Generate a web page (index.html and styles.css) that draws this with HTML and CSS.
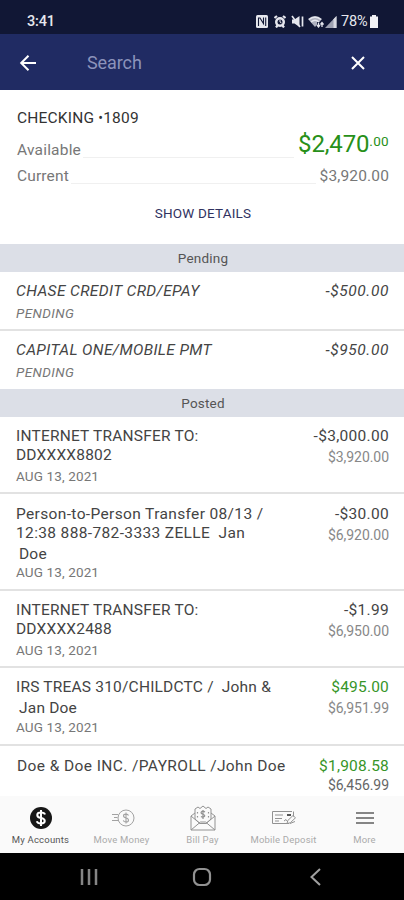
FILE: index.html
```html
<!DOCTYPE html>
<html lang="en">
<head>
<meta charset="utf-8">
<title>Checking</title>
<link rel="stylesheet" href="styles.css">
</head>
<body>
<div class="phone">
  <div class="status">
    <span class="clock">3:41</span>
    <div class="status-icons">
      <svg width="12" height="13" viewBox="0 0 12 13"><rect width="12" height="13" rx="1.500" fill="#e6e7ee"/><path d="M2.500 11V3H4l3.500 5.500V2.500M9.700 2.500V11" fill="none" stroke="#111735" stroke-width="1.100"/></svg>
      <svg class="i-alarm" width="12" height="13" viewBox="0 0 12 13"><circle cx="6" cy="7" r="5" fill="#e6e7ee"/><path d="M.5 3L3 1M11.500 3L9 1M2 12.500l1.500-2M10 12.500l-1.500-2" stroke="#e6e7ee" stroke-width="2.200"/><circle cx="6" cy="7" r="2.500" fill="#111735"/><path d="M6 4.500V7l1.500 1" stroke="#e6e7ee" fill="none"/></svg>
      <svg class="i-mute" width="13" height="13" viewBox="0 0 13 13"><path d="M1 4.500h2.500L8.500 1v11L3.500 8.500H1z" fill="#e6e7ee"/><path d="M1 1l8 11" stroke="#e6e7ee" stroke-width="1.600"/><path d="M11.500 1.500v10" stroke="#e6e7ee" stroke-width="1.700"/></svg>
      <svg class="i-wifi" width="16" height="13" viewBox="0 0 16 13"><path d="M0 4Q7-2 14 4L7 12z" fill="#aeb1bf"/><path d="M1 4.500Q7 0 13 4.500M3 7q4-3.500 8 0" fill="none" stroke="#e6e7ee" stroke-width="1.300"/><path d="M9 12V7h7v5z" fill="#111735"/><path d="M10.500 7.500v4M14 12V8M9 10l1.500 2 1.500-2M12.500 9.500L14 7.500l1.500 2" fill="none" stroke="#e6e7ee" stroke-width="1.300"/></svg>
      <svg class="i-signal" width="12" height="12" viewBox="0 0 12 12"><path d="M0 12L11.500 0v12z" fill="#9ea1b1"/><path d="M8.500 3.200L11.500 0v12h-3z" fill="#d8d9e1"/></svg>
      <span class="percent">78%</span>
      <svg class="i-battery" width="8" height="13" viewBox="0 0 8 13"><path d="M2 0h4v1.500h2V13H0V1.500h2z" fill="#f1f1f5"/></svg>
    </div>
  </div>
  <header class="appbar">
    <svg width="18" height="18" viewBox="0 0 18 18" fill="none" stroke="#fff" stroke-width="2"><path d="M17 9H2.500M9.500 1.700L2.200 9l7.300 7.300"/></svg>
    <span class="search">Search</span>
    <svg class="close" width="16" height="16" viewBox="0 0 16 16" stroke="#fff" stroke-width="2"><path d="M2 2l12 12M14 2L2 14"/></svg>
  </header>
  <section class="summary">
    <h1>CHECKING <span class="dot">•</span>1809</h1>
    <div class="balance available"><span>Available</span><i></i><strong>$2,470<sup>.00</sup></strong></div>
    <div class="balance current"><span>Current</span><i></i><b>$3,920.00</b></div>
    <div class="details">SHOW DETAILS</div>
  </section>
  <main class="list">
    <h2>Pending</h2>
    <article class="row pending"><div><p class="name">CHASE CREDIT CRD/EPAY</p><p class="date">PENDING</p></div><div class="sums"><p class="amount">-$500.00</p></div></article>
    <article class="row pending second"><div><p class="name">CAPITAL ONE/MOBILE PMT</p><p class="date">PENDING</p></div><div class="sums"><p class="amount">-$950.00</p></div></article>
    <h2>Posted</h2>
    <article class="row r3"><div><p class="name">INTERNET TRANSFER TO:<br>DDXXXX8802</p><p class="date">AUG 13, 2021</p></div><div class="sums"><p class="amount">-$3,000.00</p><p class="after">$3,920.00</p></div></article>
    <article class="row r4"><div><p class="name person">Person-to-Person Transfer 08/13 /<br>12:38 888-782-3333 ZELLE &nbsp;Jan</p><p class="name extra">Doe</p><p class="date">AUG 13, 2021</p></div><div class="sums"><p class="amount">-$30.00</p><p class="after">$6,920.00</p></div></article>
    <article class="row r5"><div><p class="name">INTERNET TRANSFER TO:<br>DDXXXX2488</p><p class="date">AUG 13, 2021</p></div><div class="sums"><p class="amount">-$1.99</p><p class="after">$6,950.00</p></div></article>
    <article class="row r6"><div><p class="name">IRS TREAS 310/CHILDCTC / &nbsp;John &amp;</p><p class="name extra">Jan Doe</p><p class="date">AUG 13, 2021</p></div><div class="sums"><p class="amount green">$495.00</p><p class="after">$6,951.99</p></div></article>
    <article class="row r7"><div><p class="name payroll">Doe &amp; Doe INC. /PAYROLL /John Doe</p></div><div class="sums"><p class="amount green">$1,908.58</p><p class="after dark">$6,456.99</p></div></article>
  </main>
  <nav class="tabs">
    <div class="tab active"><svg width="24" height="24" viewBox="0 0 24 24"><circle cx="12" cy="12" r="11" fill="#171717"/><path d="M16 8.500C15.500 7 14 6.500 12 6.500c-5 0-5 4.700 0 5.500s5 5.500 0 5.500c-2.200 0-3.700-.7-4.200-2.300M12 4v16" fill="none" stroke="#fff" stroke-width="2"/></svg><span>My Accounts</span></div>
    <div class="tab move"><svg width="26" height="24" viewBox="0 0 26 24" fill="none" stroke="#a2a2a2"><circle cx="17" cy="12" r="8"/><path d="M19.500 9.500c-.4-1-1.200-1.400-2.500-1.400-3.300 0-3.300 3.300 0 3.900s3.300 3.900 0 3.900c-1.500 0-2.400-.5-2.700-1.600M17 6.500v11M3 8.500h6M5 11.500h3.500M3 14.500h6" stroke-width="1.100"/></svg><span>Move Money</span></div>
    <div class="tab bill"><svg width="26" height="26" viewBox="0 0 26 26" fill="none" stroke="#929292"><path d="M5 8l-4 3v14h24V11l-4-3M1 11l9 7.500M25 11l-9 7.500M1 25l9.500-8h5L25 25M5 14V4l3-2 2 1.500L13 1l3 2.500L18 2l3 2v10l-5 4.500h-6z"/><path d="M15 7c-3-2-6 1-2 2.300S13 13 11 11.500M13 5v9M7.500 7v1.500M18.500 7v1.500M7.500 11v1.500M18.500 11v1.500" stroke-width="1.200"/></svg><span>Bill Pay</span></div>
    <div class="tab deposit"><svg width="26" height="24" viewBox="0 0 26 24" fill="none" stroke="#929292"><path d="M21 5.500H1.500v12H18M22.500 5.500v5M4 9h8M4 12.500h7M4 15h4M13 15l2-1.500 1 1.500"/><path d="M16 9h4" stroke="#555" stroke-width="2"/><path d="M16 17.500l.8-3L22 9.500l2.500 2.300-5.200 5zM19 17.500l5-2"/></svg><span>Mobile Deposit</span></div>
    <div class="tab more"><svg width="20" height="24" viewBox="0 0 20 24" stroke="#858585" stroke-width="2"><path d="M1 7h18M1 12h18M1 17h18"/></svg><span>More</span></div>
  </nav>
  <div class="system">
    <svg width="18" height="18" viewBox="0 0 18 18" stroke="#858585" stroke-width="2.500"><path d="M2 1v16M9 1v16M16 1v16"/></svg>
    <svg width="20" height="20" viewBox="0 0 20 20" fill="none" stroke="#929292" stroke-width="2.200"><rect x="2" y="2" width="16" height="16" rx="5.500"/></svg>
    <svg width="18" height="18" viewBox="0 0 18 18" fill="none" stroke="#a0a0a0" stroke-width="2"><path d="M14 1L5.500 9l8.500 8"/></svg>
  </div>
</div>
</body>
</html>
```
FILE: styles.css
```css
* { box-sizing: border-box; }
body, h1, h2, p { margin: 0; }
body { font-family: Roboto, sans-serif; color: #444; background: #fff; }
svg { display: block; flex: none; }
.phone { width: 404px; height: 900px; display: flex; flex-direction: column; overflow: hidden; }
.status { height: 34px; flex: none; background: #111735; color: #e6e7ee; display: flex; justify-content: space-between; padding: 9px 26px 0 27px; }
.clock { font-size: 14.500px; font-weight: 500; line-height: 26px; letter-spacing: -.2px; }
.status-icons { display: flex; align-items: center; height: 25px; }
.i-alarm { margin-left: 6px; }
.i-mute { margin-left: 5px; }
.i-wifi { margin-left: 4px; }
.i-signal { margin-left: 1px; }
.percent { font-size: 14.500px; letter-spacing: -.1px; margin-left: 4px; width: 28px; line-height: 24px; padding-top: 1px; }
.i-battery { margin-left: 1px; }
.appbar { height: 56px; flex: none; background: #202b63; display: flex; align-items: center; padding: 1px 38px 0 19px; }
.search { color: #8c93bb; font-size: 18px; line-height: 24px; margin-left: 50px; padding-top: 1px; letter-spacing: -.1px; }
.close { margin-left: auto; }
.summary { height: 154px; flex: none; padding: 18px 15px 0 17px; }
h1 { color: #333; font-size: 15.500px; font-weight: 400; line-height: 20px; letter-spacing: .2px; }
.dot { font-size: 14px; vertical-align: 0; }
.balance { display: flex; align-items: flex-end; color: #777; font-size: 15.500px; }
.balance i { flex: 1; border-bottom: 1px solid #f0f0f0; margin: 0 4px 2px 2px; }
.available { height: 32px; }
.available span { line-height: 20px; letter-spacing: .2px; }
.available strong { font-size: 24px; font-weight: 400; color: #279019; line-height: 32px; height: 32px; letter-spacing: -.15px; }
.available sup { font-size: 13.500px; line-height: 0; vertical-align: 6px; letter-spacing: .3px; }
.current { height: 26px; }
.current span, .current b { font-weight: 400; line-height: 20px; letter-spacing: .15px; }
.details { text-align: center; color: #30325f; font-size: 13.500px; line-height: 20px; margin-top: 17px; letter-spacing: .2px; }
.list { height: 552px; flex: none; overflow: hidden; }
h2 { height: 28px; background: #dcdfe7; color: #555; font-weight: 400; font-size: 13.500px; line-height: 29px; text-align: center; padding-left: 2px; letter-spacing: .2px; }
.row { display: flex; justify-content: space-between; border-bottom: 2px solid #e2e2e2; padding: 10px 15px 0 16px; }
.name { font-size: 15.500px; line-height: 19px; white-space: nowrap; letter-spacing: .2px; }
.date { font-size: 13.500px; line-height: 18px; color: #777; margin-top: 2px; letter-spacing: .13px; }
.sums { text-align: right; white-space: nowrap; }
.amount { font-size: 15.500px; line-height: 19px; letter-spacing: .3px; }
.after { font-size: 14px; line-height: 20px; color: #888; margin-top: 1px; letter-spacing: -.05px; }
.green { color: #379528; letter-spacing: .2px; }
.pending { height: 59px; font-style: italic; }
.pending .name { letter-spacing: .38px; }
.pending .amount { letter-spacing: .6px; }
.pending .date { letter-spacing: .4px; margin-top: 3px; }
.second { height: 58px; border: 0; }
.r3 { height: 77px; }
.r4 { height: 97px; }
.r4, .r7 { padding-top: 11px; }
.r4 .date { margin-top: -1px; }
.r4 .person { letter-spacing: .36px; }
.r5 { height: 77px; }
.r6 { height: 78px; }
.r6 .date { margin-top: 0; }
.r7 { height: 60px; border: 0; }
.r7 .payroll { letter-spacing: .4px; padding-left: 1px; }
.r7 .dark { color: #666; margin-top: -1px; }
.extra { padding: 1px 0 0 3px; line-height: 20px; }
.tabs { height: 57px; flex: none; background: #fafafa; display: grid; grid-template-columns: repeat(5, 81px); }
.tab { display: flex; flex-direction: column; align-items: center; color: #aaa; font-size: 9.500px; padding-top: 9px; }
.tab svg { height: 26px; }
.tab span { line-height: 14px; margin-top: 2px; white-space: nowrap; letter-spacing: .2px; }
.active { color: #555; }
.system { height: 47px; flex: none; background: #000; display: flex; align-items: center; justify-content: space-between; padding: 0 80px; }
```
